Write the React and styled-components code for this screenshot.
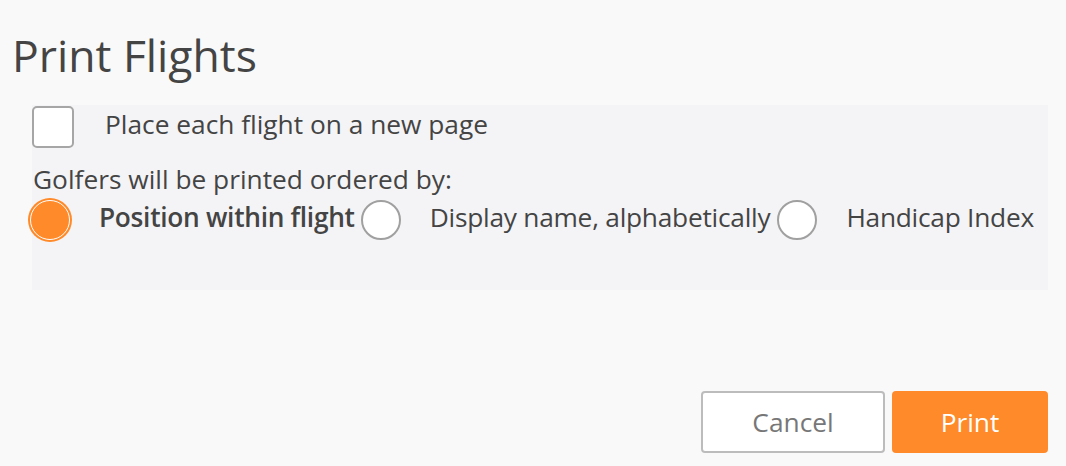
import React, { useState } from "react";
import styled, { createGlobalStyle } from "styled-components";

const FONT = `"Open Sans", "Lato", sans-serif`;

const Global = createGlobalStyle`
  html, body { margin: 0; padding: 0; background: #f9f9f9; }
  body { font-family: ${FONT}; color: #444; }
`;

const Page = styled.div`
  width: 1066px;
  height: 466px;
  box-sizing: border-box;
  padding: 25px 18px 0 32px;
  display: flex;
  flex-direction: column;
`;

const Title = styled.h1`
  margin: 0 0 0 -20px;
  font-size: 44.5px;
  font-weight: 400;
  line-height: 60px;
  color: #444;
`;

const Panel = styled.div`
  margin-top: 20px;
  height: 185px;
  background: #f4f4f6;
  box-sizing: border-box;
  padding-top: 1px;
  display: flex;
  flex-direction: column;
`;

const CheckRow = styled.label`
  display: flex;
  align-items: flex-start;
  gap: 31px;
`;

const Box = styled.span`
  width: 42px;
  height: 42px;
  box-sizing: border-box;
  border: 2px solid #a6a6a6;
  border-radius: 5px;
  background: #fff;
`;

const Text = styled.span`
  font-size: 26.3px;
  line-height: 36px;
  font-weight: 400;
  color: #444;
  white-space: nowrap;
`;

const Heading = styled(Text)`
  margin-top: 13px;
  margin-left: 1px;
`;

const RadioRow = styled.div`
  margin-top: 3px;
  display: flex;
  align-items: flex-start;
`;

const Option = styled.label`
  display: flex;
  align-items: flex-start;
  gap: 29px;
  margin-right: 7px;
  cursor: pointer;
`;

const FirstOption = styled(Option)`
  margin-left: -2px;
  margin-right: 6px;
`;

const OptionText = styled(Text)`
  line-height: 34px;
  font-weight: ${(p) => (p.$bold ? 600 : 400)};
  letter-spacing: ${(p) => (p.$bold ? "-0.3px" : "-0.25px")};
`;

const Radio = styled.span`
  flex: none;
  width: 40px;
  height: 40px;
  box-sizing: border-box;
  border-radius: 50%;
  background: ${(p) => (p.$on ? "#ff8a2a" : "#fff")};
  border: ${(p) => (p.$on ? "1.5px solid #fff" : "2px solid #a0a0a0")};
  box-shadow: ${(p) => (p.$on ? "0 0 0 2px #ff8a2a" : "none")};
`;

const Actions = styled.div`
  margin-top: 101px;
  display: flex;
  justify-content: flex-end;
  gap: 7px;
`;

const Button = styled.button`
  height: 62px;
  width: ${(p) => p.$w}px;
  box-sizing: border-box;
  border-radius: 4px;
  font-family: ${FONT};
  font-size: 26.3px;
  cursor: pointer;
  background: ${(p) => (p.$primary ? "#ff8a2a" : "#fff")};
  color: ${(p) => (p.$primary ? "#fff" : "#777")};
  border: 2px solid ${(p) => (p.$primary ? "#ff8a2a" : "#bcbcbc")};
`;

const options = [
  { id: "pos", label: "Position within flight" },
  { id: "name", label: "Display name, alphabetically" },
  { id: "hcp", label: "Handicap Index" },
];

export default function App() {
  const [sel, setSel] = useState("pos");
  return (
    <Page>
      <Global />
      <Title>Print Flights</Title>
      <Panel>
        <CheckRow>
          <Box />
          <Text>Place each flight on a new page</Text>
        </CheckRow>
        <Heading>Golfers will be printed ordered by:</Heading>
        <RadioRow>
          {options.map((o, i) => {
            const Opt = i === 0 ? FirstOption : Option;
            return (
              <Opt key={o.id} onClick={() => setSel(o.id)}>
                <Radio $on={sel === o.id} />
                <OptionText $bold={sel === o.id}>{o.label}</OptionText>
              </Opt>
            );
          })}
        </RadioRow>
      </Panel>
      <Actions>
        <Button $w={184}>Cancel</Button>
        <Button $w={156} $primary>Print</Button>
      </Actions>
    </Page>
  );
}
